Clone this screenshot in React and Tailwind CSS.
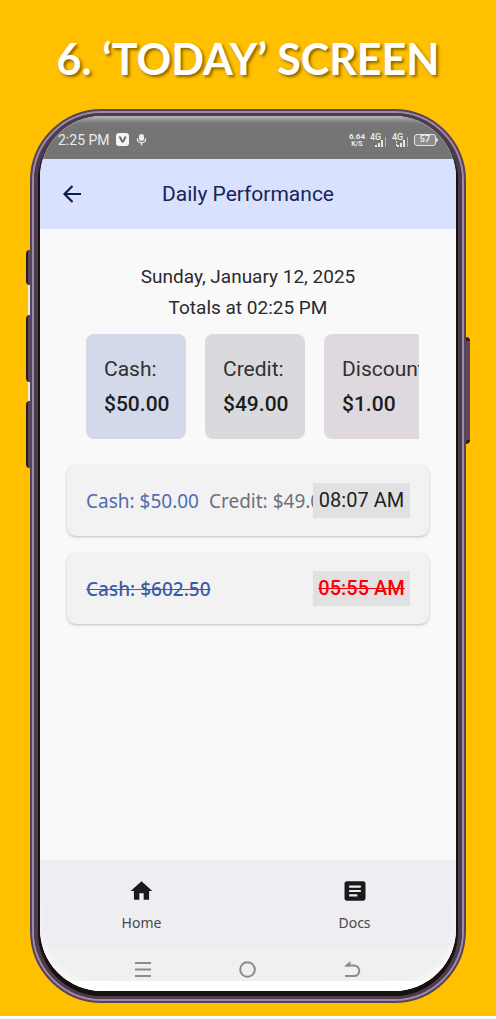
const totals = [
  { label: "Cash:", value: "$50.00", tone: "bg-[#d3d9e8]" },
  { label: "Credit:", value: "$49.00", tone: "bg-[#d9dadd]" },
  { label: "Discount:", value: "$1.00", tone: "bg-[#dfd8de]" },
];

function Signal({ dual }) {
  return (
    <div className="flex flex-col items-start">
      <span className="h-2 text-[9px] leading-[8px] font-medium">4G</span>
      <svg className="-mt-1 ml-1" width="13" height="10" viewBox="0 0 13 10" fill="#e8e8e8" aria-hidden="true">
        {dual && <path d="M0 4h1v2H0zM0 7h1v2H0z" />}
        <path d="M1 8h2v2H1zM4 6h2v4H4zM7 3h2v7H7z" />
        <path d="M11 0h1v10h-1z" opacity=".55" />
      </svg>
    </div>
  );
}

function StatusBar() {
  return (
    <div className="flex h-[43px] items-center justify-between bg-[#757575] pt-1 pr-[18px] pl-[18px] text-[#ececec]">
      <div className="flex items-center gap-[6px]">
        <span className="text-[14px] leading-4">2:25 PM</span>
        <svg width="13" height="13" viewBox="0 0 13 13" aria-hidden="true">
          <rect width="13" height="13" rx="3" fill="#f5f5f5" />
          <path d="M2.500 3.500h2.300l2 4 1.600-4h2.300L7.800 9.600H5.600z" fill="#6a6a6a" />
        </svg>
        <svg width="13" height="12" viewBox="0 0 13 12" aria-hidden="true">
          <rect x="4" y="0" width="5" height="7" rx="2.500" fill="#ececec" />
          <path d="M2.500 4.500v1a4 3.300 0 0 0 8 0v-1M6.500 8.500v3" fill="none" stroke="#ececec" strokeWidth="1.400" />
        </svg>
      </div>
      <div className="flex items-center gap-[5px]">
        <div className="flex flex-col items-center font-bold">
          <span className="text-[8px] leading-[8px]">6.64</span>
          <span className="text-[7px] leading-[6px]">K/S</span>
        </div>
        <Signal />
        <Signal dual />
        <div className="flex items-center">
          <span className="flex h-3 w-[22px] items-center justify-center rounded-[3px] border border-[#e4e4e4] bg-[#8c8c8c] text-[9px] leading-none font-bold">57</span>
          <span className="h-1 w-[2px] rounded-r-sm bg-[#e4e4e4]" />
        </div>
      </div>
    </div>
  );
}

function Entry({ children, time, voided }) {
  return (
    <li className="flex h-[71px] items-center rounded-[9px] bg-[#f2f2f2] px-[19px] shadow-[0_1px_3px_rgba(0,0,0,0.24)]">
      <div className="flex min-w-0 flex-1 gap-[10px] overflow-hidden whitespace-nowrap font-['Noto_Sans',sans-serif] text-[19px] leading-6">{children}</div>
      <time
        className={
          voided
            ? "w-[97px] shrink-0 bg-[#e1e1e1] text-center text-[20px] leading-[35px] font-medium text-[#fb0007] line-through decoration-1"
            : "w-[97px] shrink-0 bg-[#e1e1e1] text-center text-[20px] leading-[35px] text-[#222222]"
        }
      >
        {time}
      </time>
    </li>
  );
}

function Screen() {
  return (
    <div className="relative flex flex-1 flex-col overflow-hidden rounded-[62px] bg-[#f9f9f9]">
      <StatusBar />
      <header className="grid h-[70px] grid-cols-[40px_1fr_40px] items-center bg-[#dae1ff] px-3 text-[#14265a]">
        <button type="button" aria-label="Back" className="flex h-10 items-center justify-center">
          <svg width="20" height="20" viewBox="0 0 20 20" fill="none" stroke="#0b1f50" strokeWidth="2.200" aria-hidden="true">
            <path d="M19 10H2.500M10.500 2 2.500 10l8 8" />
          </svg>
        </button>
        <h2 className="text-center text-[21px] leading-7">Daily Performance</h2>
      </header>

      <main className="flex-1 pt-8">
        <div className="text-center text-[19px] leading-[31px] text-[#2b2b2b]">
          <p>Sunday, January 12, 2025</p>
          <p>Totals at 02:25 PM</p>
        </div>
        <div className="mt-[11px] mr-[37px] ml-[46px] flex gap-[19px] overflow-hidden">
          {totals.map((t) => (
            <div key={t.label} className={`h-[105px] w-[100px] shrink-0 rounded-lg pt-[18px] pl-[18px] leading-[35px] whitespace-nowrap ${t.tone}`}>
              <p className="text-[21px] text-[#303030]">{t.label}</p>
              <p className="text-[21px] font-medium text-[#1c1c1c]">{t.value}</p>
            </div>
          ))}
        </div>
        <ul className="mx-[27px] mt-[26px] flex flex-col gap-[17px]">
          <Entry time="08:07 AM">
            <span className="text-[#4f6cb0]">Cash: $50.00</span>
            <span className="text-[#6d7080]">Credit: $49.00</span>
          </Entry>
          <Entry time="05:55 AM" voided>
            <span className="font-medium text-[#3d5ba9] line-through decoration-1">Cash: $602.50</span>
          </Entry>
        </ul>
      </main>

      <nav className="flex h-[88px] gap-[10px] bg-[#eeedf2] font-['Noto_Sans',sans-serif] text-[14px] leading-5 text-[#47464c]">
        <a href="#home" className="flex flex-1 flex-col items-center gap-[9px] pt-[18px]">
          <svg width="27" height="26" viewBox="0 0 24 24" fill="#1a1a1a" aria-hidden="true">
            <path d="M10 20v-6h4v6h5v-8h3L12 3 2 12h3v8z" />
          </svg>
          Home
        </a>
        <a href="#docs" className="flex flex-1 flex-col items-center gap-[9px] pt-[18px]">
          <svg width="28" height="26" viewBox="0 0 24 24" preserveAspectRatio="none" fill="#1a1a1a" aria-hidden="true">
            <path d="M19 3H5c-1.100 0-2 .9-2 2v14c0 1.100.9 2 2 2h14c1.100 0 2-.9 2-2V5c0-1.100-.9-2-2-2zm-5 14H7v-2h7v2zm3-4H7v-2h10v2zm0-4H7V7h10v2z" />
          </svg>
          Docs
        </a>
      </nav>
      <div className="bg-white pb-[10px]">
        <div className="flex h-[33px] items-center justify-center gap-[88px] bg-[#f0f0f0] pt-[10px]">
          <button type="button" aria-label="Recent apps">
            <svg width="16" height="17" viewBox="0 0 16 17" stroke="#8b8b8b" strokeWidth="2" aria-hidden="true">
              <path d="M0 2h16M0 8.500h16M0 15h16" />
            </svg>
          </button>
          <button type="button" aria-label="Home screen">
            <svg width="17" height="17" viewBox="0 0 17 17" fill="none" stroke="#8b8b8b" strokeWidth="2" aria-hidden="true">
              <circle cx="8.500" cy="8.500" r="7.300" />
            </svg>
          </button>
          <button type="button" aria-label="Previous screen">
            <svg width="17" height="17" viewBox="0 0 17 17" fill="none" stroke="#8b8b8b" strokeWidth="2" aria-hidden="true">
              <path d="M2 4.500h8a5.300 5.300 0 0 1 0 10.600H1" />
              <path d="M0 5.500 6.500 0v5.500z" fill="#8b8b8b" stroke="none" />
            </svg>
          </button>
        </div>
      </div>
      <div className="pointer-events-none absolute inset-x-0 top-0 h-[43px] rounded-t-[62px] shadow-[inset_0_5px_7px_-3px_rgba(255,255,255,0.7)]" />
      <div className="pointer-events-none absolute inset-x-0 bottom-0 h-[88px] rounded-b-[62px] shadow-[inset_0_-7px_8px_-3px_#ffffff]" />
    </div>
  );
}

export default function App() {
  return (
    <div className="min-h-screen bg-white pb-[3px] font-[Roboto,sans-serif]">
      <div className="flex min-h-[calc(100vh-3px)] flex-col bg-[#ffc000] pb-[13px]">
        <h1 className="pt-[31px] pb-[22px] text-center font-[Lato,sans-serif] text-[43px] leading-[56px] font-bold whitespace-nowrap text-white [text-shadow:2px_2px_3px_rgba(70,50,0,0.65)]">
          6. ‘TODAY’ SCREEN
        </h1>
        <div className="relative mx-[30px] flex flex-1 flex-col">
          <div className="absolute top-[141px] -left-1 h-[35px] w-2 rounded-l-sm border-l-2 border-[#241b28] bg-[#5d465f]" />
          <div className="absolute top-[176px] -left-[2px] h-[30px] w-[2px] bg-[#f3eee6]" />
          <div className="absolute top-[206px] -left-1 h-[67px] w-2 rounded-l-sm border-l-2 border-[#241b28] bg-[#5d465f]" />
          <div className="absolute top-[273px] -left-[2px] h-[19px] w-[2px] bg-[#f3eee6]" />
          <div className="absolute top-[292px] -left-1 h-[67px] w-2 rounded-l-sm border-l-2 border-[#241b28] bg-[#5d465f]" />
          <div className="absolute top-[228px] -right-1 h-[107px] w-2 rounded-r-sm border-y-4 border-[#2e2032] bg-[#5d465f]" />
          <div className="relative flex flex-1 flex-col rounded-[72px] border-2 border-[#57435b] bg-[#57435b]">
            <div className="flex flex-1 flex-col rounded-[70px] border-2 border-[#9f8ba1] bg-[#4e3a50]">
              <div className="flex flex-1 flex-col rounded-[68px] border-x-4 border-t-[3px] border-b-[3px] border-[#4e3a50] bg-[#15120f]">
                <div className="flex flex-1 flex-col rounded-[64px] bg-[linear-gradient(#8a8a8a_0px,#4a464a_30px,#15120f_60px)] px-[2px] pb-[5px]">
                  <Screen />
                </div>
              </div>
            </div>
          </div>
        </div>
      </div>
    </div>
  );
}
